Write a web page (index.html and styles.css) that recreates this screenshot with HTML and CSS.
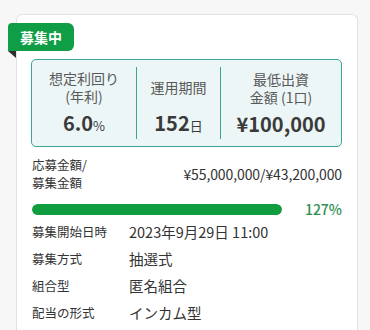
FILE: index.html
```html
<!DOCTYPE html>
<html lang="ja">
<head>
<meta charset="utf-8">
<link rel="stylesheet" href="styles.css">
</head>
<body>
<div class="card">
  <div class="badge">募集中</div>
  <div class="stats">
    <div class="stat s1">
      <div class="label"><span>想定利回り</span><span>(年利)</span></div>
      <div class="value">6.0<small>%</small></div>
    </div>
    <div class="stat s2">
      <div class="label"><span>運用期間</span></div>
      <div class="value">152<small>日</small></div>
    </div>
    <div class="stat s3">
      <div class="label"><span>最低出資</span><span>金額 (1口)</span></div>
      <div class="value">¥100,000</div>
    </div>
  </div>
  <div class="amount">
    <div class="amount-label"><span>応募金額/</span><span>募集金額</span></div>
    <div class="amount-value">¥55,000,000/¥43,200,000</div>
  </div>
  <div class="progress">
    <div class="track"><div class="fill" style="width:100%"></div></div>
    <div class="pct">127%</div>
  </div>
  <dl class="info">
    <div class="row"><dt>募集開始日時</dt><dd>2023年9月29日 11:00</dd></div>
    <div class="row"><dt>募集方式</dt><dd>抽選式</dd></div>
    <div class="row"><dt>組合型</dt><dd>匿名組合</dd></div>
    <div class="row"><dt>配当の形式</dt><dd>インカム型</dd></div>
  </dl>
</div>
</body>
</html>
```

FILE: styles.css
```css
* { box-sizing: border-box; }
html, body { margin: 0; padding: 0; }
body {
  background: #f7f7f7;
  font-family: "Noto Sans CJK JP", "Noto Sans", sans-serif;
  color: #333;
  width: 370px;
  height: 330px;
  overflow: hidden;
}
.card {
  position: relative;
  margin: 14px 0 0 16px;
  width: 342px;
  height: 316px;
  background: #fff;
  border: 1px solid #e2e2e2;
  border-bottom: 0;
  border-radius: 6px 6px 0 0;
  padding: 44px 15px 0 14px;
}
.badge {
  position: absolute;
  left: -9px;
  top: 8px;
  width: 66px;
  height: 28px;
  background: #0f9d46;
  color: #fff;
  font-weight: 700;
  font-size: 14px;
  line-height: 28px;
  padding-left: 12px;
  border-radius: 4px 6px 6px 0;
}
.badge::after {
  content: "";
  position: absolute;
  left: 0;
  top: 28px;
  border-top: 7px solid #2f2f2f;
  border-left: 8px solid transparent;
}
.stats {
  display: flex;
  height: 88px;
  background: #edf6f6;
  border: 1px solid #3aa597;
  border-radius: 5px;
  padding: 7px 0;
}
.stat {
  display: flex;
  flex-direction: column;
  align-items: center;
  justify-content: center;
  text-align: center;
}
.s1 { width: 105px; border-right: 1px solid #3aa597; }
.s2 { width: 84px; border-right: 1px solid #3aa597; }
.s3 { flex: 1; }
.label {
  font-size: 14px;
  color: #595959;
  height: 36px;
  display: flex;
  flex-direction: column;
  justify-content: center;
  align-items: center;
  margin-top: 1px;
}
.label span { display: block; height: 18px; line-height: 18px; }
.value {
  font-size: 20px;
  font-weight: 700;
  line-height: 26px;
  color: #3a3a3a;
  margin-top: 5px;
}
.value small { font-size: 13px; font-weight: 400; }
.amount {
  display: flex;
  align-items: center;
  justify-content: space-between;
  margin-top: 9px;
  padding-left: 1px;
}
.amount-label { font-size: 12.5px; display: flex; flex-direction: column; }
.amount-label span { display: block; height: 18px; line-height: 18px; }
.amount-value { font-size: 14px; color: #333; letter-spacing: -0.1px; }
.progress {
  display: flex;
  align-items: center;
  margin-top: 7px;
  padding-left: 1px;
}
.track { width: 250px; height: 11px; border-radius: 6px; background: #e6e6e6; overflow: hidden; }
.fill { height: 100%; background: #0f9d3f; border-radius: 6px; }
.pct { margin-left: auto; font-size: 14px; color: #2f8f52; font-weight: 500; }
.info { margin: -1px 0 0 1px; }
.row { display: flex; height: 27px; align-items: center; line-height: 18px; }
.row dt { width: 97px; color: #333; font-size: 12.5px; }
.row dd { margin: 0; color: #333; font-size: 14.5px; }
```
